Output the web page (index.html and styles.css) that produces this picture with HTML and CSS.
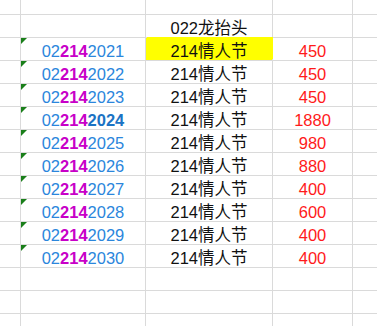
FILE: index.html
```html
<!DOCTYPE html>
<html lang="zh">
<head>
<meta charset="utf-8">
<title>Sheet</title>
<link rel="stylesheet" href="styles.css">
</head>
<body>
<div class="sheet">
  <div class="cell top"></div><div class="cell top"></div><div class="cell top"></div><div class="cell top"></div><div class="cell top"></div>

  <div class="cell"></div><div class="cell"></div><div class="cell txt">022龙抬头</div><div class="cell"></div><div class="cell"></div>

  <div class="cell"></div><div class="cell code flag"><span>02</span><b class="mid">214</b><span>2021</span></div><div class="cell txt hl">214情人节</div><div class="cell num">450</div><div class="cell"></div>
  <div class="cell"></div><div class="cell code flag"><span>02</span><b class="mid">214</b><span>2022</span></div><div class="cell txt">214情人节</div><div class="cell num">450</div><div class="cell"></div>
  <div class="cell"></div><div class="cell code flag"><span>02</span><b class="mid">214</b><span>2023</span></div><div class="cell txt">214情人节</div><div class="cell num">450</div><div class="cell"></div>
  <div class="cell"></div><div class="cell code flag"><span>02</span><b class="mid">214</b><b class="strong">2024</b></div><div class="cell txt">214情人节</div><div class="cell num">1880</div><div class="cell"></div>
  <div class="cell"></div><div class="cell code flag"><span>02</span><b class="mid">214</b><span>2025</span></div><div class="cell txt">214情人节</div><div class="cell num">980</div><div class="cell"></div>
  <div class="cell"></div><div class="cell code flag"><span>02</span><b class="mid">214</b><span>2026</span></div><div class="cell txt">214情人节</div><div class="cell num">880</div><div class="cell"></div>
  <div class="cell"></div><div class="cell code flag"><span>02</span><b class="mid">214</b><span>2027</span></div><div class="cell txt">214情人节</div><div class="cell num">400</div><div class="cell"></div>
  <div class="cell"></div><div class="cell code flag"><span>02</span><b class="mid">214</b><span>2028</span></div><div class="cell txt">214情人节</div><div class="cell num">600</div><div class="cell"></div>
  <div class="cell"></div><div class="cell code flag"><span>02</span><b class="mid">214</b><span>2029</span></div><div class="cell txt">214情人节</div><div class="cell num">400</div><div class="cell"></div>
  <div class="cell"></div><div class="cell code flag"><span>02</span><b class="mid">214</b><span>2030</span></div><div class="cell txt">214情人节</div><div class="cell num">400</div><div class="cell"></div>

  <div class="cell"></div><div class="cell"></div><div class="cell"></div><div class="cell"></div><div class="cell"></div>
  <div class="cell"></div><div class="cell"></div><div class="cell"></div><div class="cell"></div><div class="cell"></div>
  <div class="cell"></div><div class="cell"></div><div class="cell"></div><div class="cell"></div><div class="cell"></div>
</div>
</body>
</html>
```
FILE: styles.css
```css
html, body {
  margin: 0;
  padding: 0;
  background: #ffffff;
  overflow: hidden;
}

.sheet {
  display: grid;
  grid-template-columns: 20px 124px 126px 79px 1fr;
  grid-template-rows: 14px repeat(14, 22px);
  gap: 1px;
  background: #dadada;
  width: 377px;
  height: 326px;
  overflow: hidden;
  font-family: "Liberation Sans", "Noto Sans CJK SC", sans-serif;
  font-size: 16.5px;
}

.cell {
  background: #ffffff;
  display: flex;
  align-items: center;
  justify-content: center;
  padding-top: 3px;
  box-sizing: border-box;
  line-height: 18px;
  white-space: nowrap;
  position: relative;
}

.cell.top {
  padding-top: 0;
}

.code {
  color: #2b86dc;
}

.code b {
  font-weight: bold;
}

.code .mid {
  color: #c800c8;
}

.code .strong {
  color: #1b73c4;
}

.flag::before {
  content: "";
  position: absolute;
  left: 0;
  top: 0;
  width: 0;
  height: 0;
  border-top: 6px solid #1a7f1a;
  border-right: 6px solid transparent;
}

.txt {
  color: #111111;
  font-size: 16.5px;
}

.hl {
  background: #ffff00;
  box-shadow: 1px -1px 0 0 #ffff00;
}

.num {
  color: #ff1a1a;
}
```
